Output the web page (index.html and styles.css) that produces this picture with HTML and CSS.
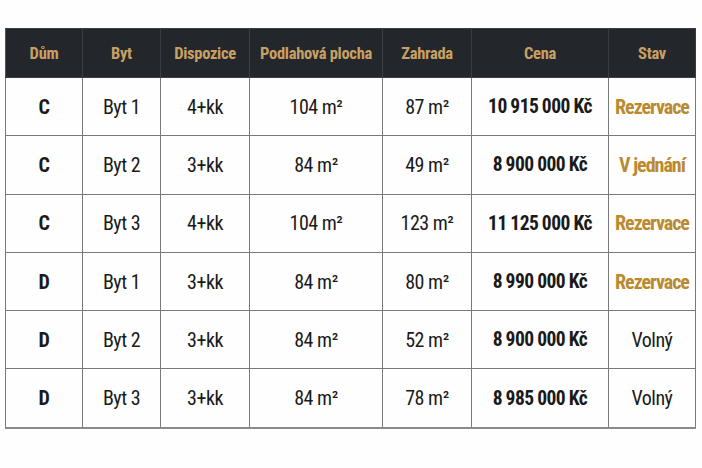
FILE: index.html
```html
<!DOCTYPE html>
<html lang="cs">
<head>
<meta charset="utf-8">
<link rel="stylesheet" href="styles.css">
</head>
<body>
<table class="units">
  <colgroup>
    <col class="c-dum"><col class="c-byt"><col class="c-disp"><col class="c-plocha"><col class="c-zahrada"><col class="c-cena"><col class="c-stav">
  </colgroup>
  <thead>
    <tr><th>Dům</th><th>Byt</th><th>Dispozice</th><th>Podlahová plocha</th><th>Zahrada</th><th>Cena</th><th>Stav</th></tr>
  </thead>
  <tbody>
    <tr><td class="house">C</td><td>Byt 1</td><td>4+kk</td><td>104 m²</td><td>87 m²</td><td class="price">10 915 000 Kč</td><td class="status gold">Rezervace</td></tr>
    <tr><td class="house">C</td><td>Byt 2</td><td>3+kk</td><td>84 m²</td><td>49 m²</td><td class="price">8 900 000 Kč</td><td class="status gold">V jednání</td></tr>
    <tr><td class="house">C</td><td>Byt 3</td><td>4+kk</td><td>104 m²</td><td>123 m²</td><td class="price">11 125 000 Kč</td><td class="status gold">Rezervace</td></tr>
    <tr><td class="house">D</td><td>Byt 1</td><td>3+kk</td><td>84 m²</td><td>80 m²</td><td class="price">8 990 000 Kč</td><td class="status gold">Rezervace</td></tr>
    <tr><td class="house">D</td><td>Byt 2</td><td>3+kk</td><td>84 m²</td><td>52 m²</td><td class="price">8 900 000 Kč</td><td class="status">Volný</td></tr>
    <tr><td class="house">D</td><td>Byt 3</td><td>3+kk</td><td>84 m²</td><td>78 m²</td><td class="price">8 985 000 Kč</td><td class="status">Volný</td></tr>
  </tbody>
</table>
</body>
</html>
```
FILE: styles.css
```css
html, body {
  margin: 0;
  background: #fefefe;
}
body {
  padding: 28px 0 0 5px;
  font-family: "Roboto Condensed", Roboto, sans-serif;
  font-stretch: condensed;
  color: #1a1a1a;
}
.units {
  border-collapse: collapse;
  table-layout: fixed;
  width: 690px;
}
.c-dum { width: 77px; }
.c-byt { width: 78px; }
.c-disp { width: 89px; }
.c-plocha { width: 133px; }
.c-zahrada { width: 89px; }
.c-cena { width: 137px; }
.c-stav { width: 87px; }
.units th {
  background: #23272b;
  color: #c9a063;
  font-weight: bold;
  font-size: 16.5px;
  letter-spacing: -0.3px;
  height: 48px;
  padding: 0;
  text-align: center;
  border: 1px solid #3a3e42;
  border-left-color: #555;
}
.units td {
  height: 57.3px;
  padding: 0;
  text-align: center;
  font-size: 20px;
  letter-spacing: -0.5px;
  border: 1px solid #7a7a7a;
}
.units tbody tr:last-child td {
  border-bottom: 2px solid #8a8a8a;
}
.units td.house, .units td.price {
  font-weight: bold;
}
.units td.price {
  font-size: 19.5px;
  letter-spacing: -0.5px;
  word-spacing: -0.5px;
}
.units td.gold {
  color: #b98a30;
  font-weight: bold;
  letter-spacing: -1px;
}
```
